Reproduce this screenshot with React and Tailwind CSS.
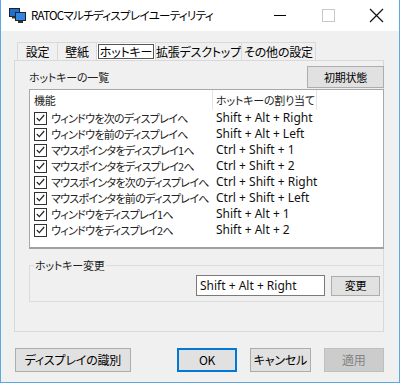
import React from 'react';

const jp = "font-['Noto_Sans_CJK_JP',sans-serif] [font-feature-settings:'palt']";
const latin = "font-['Noto_Sans','Noto_Sans_CJK_JP',sans-serif] text-[12px] tracking-normal [font-feature-settings:normal]";

const rows = [
  ['ウィンドウを次のディスプレイへ', 'Shift + Alt + Right'],
  ['ウィンドウを前のディスプレイへ', 'Shift + Alt + Left'],
  ['マウスポインタをディスプレイ1へ', 'Ctrl + Shift + 1'],
  ['マウスポインタをディスプレイ2へ', 'Ctrl + Shift + 2'],
  ['マウスポインタを次のディスプレイへ', 'Ctrl + Shift + Right'],
  ['マウスポインタを前のディスプレイへ', 'Ctrl + Shift + Left'],
  ['ウィンドウをディスプレイ1へ', 'Shift + Alt + 1'],
  ['ウィンドウをディスプレイ2へ', 'Shift + Alt + 2'],
];

const tabs = [
  { label: '設定', w: 'w-[41px]' },
  { label: '壁紙', w: 'w-[40px]' },
  { label: 'ホットキー', w: 'w-[60px]', active: true },
  { label: '拡張デスクトップ', w: 'w-[87px]' },
  { label: 'その他の設定', w: 'w-[75px]' },
];

function AppIcon() {
  return (
    <svg width="17" height="16" viewBox="0 0 17 16">
      <rect x="0.5" y="0.5" width="10" height="8" fill="#1e6fd0" stroke="#222" />
      <rect x="3" y="8.5" width="5" height="2" fill="#333" />
      <rect x="6.5" y="4.5" width="10" height="8" fill="#2f86e6" stroke="#222" />
      <rect x="9" y="12.5" width="5" height="2.5" fill="#333" />
    </svg>
  );
}

function Check() {
  return (
    <span className="w-[13px] h-[13px] border border-[#333] bg-white flex items-center justify-center shrink-0">
      <svg width="9" height="8" viewBox="0 0 9 8">
        <path d="M0.8 4 L3.3 6.6 L8.2 1" fill="none" stroke="#222" strokeWidth="1.2" />
      </svg>
    </span>
  );
}

export default function App() {
  return (
    <div className={`w-[400px] h-[383px] flex flex-col border border-t-0 border-[#5aa8e0] bg-[#f0f0f0] text-[11px] tracking-[-0.2px] text-black ${jp}`}>
      {/* title bar */}
      <div className="h-[31px] bg-white flex items-center shrink-0">
        <div className="ml-[8px] mr-[5px] flex items-center">
          <AppIcon />
        </div>
        <span className="text-[11.5px] leading-none mt-[1px] tracking-[-0.7px]">RATOCマルチディスプレイユーティリティ</span>
        <div className="ml-auto flex items-center h-full">
          <div className="w-[46px] h-full flex items-center justify-center">
            <span className="w-[12px] h-px bg-black" />
          </div>
          <div className="w-[46px] h-full flex items-center justify-center ml-[2px]">
            <span className="w-[13px] h-[13px] border border-[#c8c8c8]" />
          </div>
          <div className="w-[46px] h-full flex items-center justify-center ml-[2px]">
            <svg width="15" height="15" viewBox="0 0 15 15">
              <path d="M1 1 L14 14 M14 1 L1 14" stroke="#111" strokeWidth="1.2" />
            </svg>
          </div>
        </div>
      </div>

      <div className="flex-1 flex flex-col pl-[13px] pr-[15px]">
        {/* tabs */}
        <div className="flex items-end h-[29px] pl-[3px]">
          {tabs.map((t) => (
            <div
              key={t.label}
              className={`${t.w} h-[18px] flex items-center justify-center border border-b-0 border-[#d9d9d9] -ml-px first:ml-0 leading-none whitespace-nowrap text-[12px] ${
                t.active ? 'bg-white' : 'bg-[#f0f0f0]'
              }`}
            >
              <span className={t.active ? 'border border-[#555] px-[1px] leading-[13px]' : ''}>{t.label}</span>
            </div>
          ))}
        </div>

        {/* tab page */}
        <div className="h-[272px] border border-[#d9d9d9] bg-[#f0f0f0] flex flex-col pl-[14px]">
          <div className="flex items-center mt-[5px] h-[22px]">
            <span className="text-[#222]">ホットキーの一覧</span>
            <button className="ml-auto w-[77px] h-[22px] bg-[#e1e1e1] border border-[#adadad] -mr-px">初期状態</button>
          </div>

          <div className="mt-[1px] h-[160px] bg-white border border-[#a8a8a8] border-b-2 border-b-[#a0a0a0] -mr-px flex flex-col">
            <div className="h-[20px] flex items-center shrink-0 text-[#222] whitespace-nowrap">
              <span className="w-[183px] pl-[4px] border-r border-[#e5e5e5] h-full flex items-center">機能</span>
              <span className="w-[104px] pl-[3px] border-r border-[#e5e5e5] h-full flex items-center">ホットキーの割り当て</span>
            </div>
            {rows.map(([name, key]) => (
              <div key={name} className="h-[16px] flex items-center">
                <div className="w-[183px] flex items-center pl-[4px] gap-[4px] text-[#222]">
                  <Check />
                  <span className="whitespace-nowrap tracking-[-0.7px]">{name}</span>
                </div>
                <span className={`pl-[3px] text-[#111] whitespace-nowrap ${latin}`}>{key}</span>
              </div>
            ))}
          </div>

          {/* group box */}
          <div className="mt-[16px] h-[37px] border border-[#dcdcdc] -mr-px relative flex items-center justify-end pr-[3px]">
            <span className="absolute left-[4px] -top-[9px] bg-[#f0f0f0] px-[1px] leading-[16px] text-[#222]">ホットキー変更</span>
            <div className={`w-[129px] h-[21px] bg-white border border-[#7a7a7a] flex items-center pl-[3px] text-[#111] mt-[4px] ${latin}`}>
              Shift + Alt + Right
            </div>
            <button className="ml-[6px] w-[49px] h-[20px] bg-[#e1e1e1] border border-[#adadad] mt-[4px]">変更</button>
          </div>
        </div>

        {/* bottom buttons */}
        <div className="flex items-center mt-[16px] text-[12px]">
          <button className="w-[117px] h-[24px] ml-px bg-[#e1e1e1] border border-[#adadad]">ディスプレイの識別</button>
          <button className="ml-[46px] w-[61px] h-[24px] bg-[#e1e1e1] border-2 border-[#0078d7]">OK</button>
          <button className="ml-[13px] w-[61px] h-[24px] bg-[#e1e1e1] border border-[#adadad]">キャンセル</button>
          <button className="ml-[13px] w-[61px] h-[24px] bg-[#cccccc] border border-[#bfbfbf] text-[#838383]">適用</button>
        </div>
      </div>
    </div>
  );
}
